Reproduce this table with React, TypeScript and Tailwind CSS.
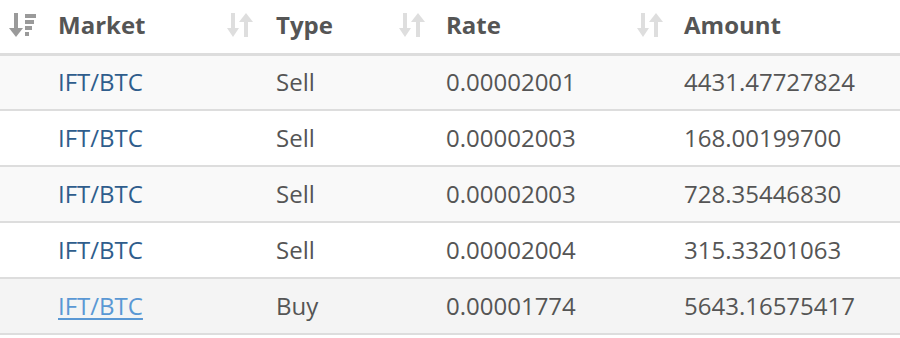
import React from 'react';

interface tradeInterface {
  market: string
  type: string
  rate: string
  amount: string
}

const trades: tradeInterface[] = [
  { market: 'IFT/BTC', type: 'Sell', rate: '0.00002001', amount: '4431.47727824' },
  { market: 'IFT/BTC', type: 'Sell', rate: '0.00002003', amount: '168.00199700' },
  { market: 'IFT/BTC', type: 'Sell', rate: '0.00002003', amount: '728.35446830' },
  { market: 'IFT/BTC', type: 'Sell', rate: '0.00002004', amount: '315.33201063' },
  { market: 'IFT/BTC', type: 'Buy', rate: '0.00001774', amount: '5643.16575417' },
];

// active column: arrow down + shrinking bars
const SortActive = () => (
  <svg width="28" height="24" viewBox="0 0 28 24" fill="#9a9a9a">
    <rect x="5" y="0" width="4" height="16" />
    <polygon points="0,15 14,15 7,24" />
    <rect x="16" y="1" width="11" height="4" />
    <rect x="16" y="7" width="9" height="4" />
    <rect x="16" y="13" width="7" height="4" />
    <rect x="16" y="19" width="4" height="4" />
  </svg>
);

const SortIdle = () => (
  <svg width="26" height="24" viewBox="0 0 26 24" fill="#dedede">
    <rect x="4" y="0" width="4" height="16" />
    <polygon points="0,15 12,15 6,24" />
    <rect x="17" y="8" width="4" height="16" />
    <polygon points="12,9 26,9 19,0" />
  </svg>
);

const columns = [
  { label: 'Market', width: 'w-[218px]', iconBox: 'w-[58px]', active: true },
  { label: 'Type', width: 'w-[172px]', iconBox: 'w-[58px]', active: false },
  { label: 'Rate', width: 'w-[238px]', iconBox: 'w-[56px]', active: false },
  { label: 'Amount', width: 'w-[272px]', iconBox: 'w-[56px]', active: false },
];

const App = () => {
  return (
    <div className="w-[900px] h-[338px] bg-white font-['Open_Sans',sans-serif] text-[#555]">
      <table className="w-[900px] border-collapse table-fixed">
        <thead>
          <tr className="border-b-[3px] border-[#dddddd]">
            {columns.map((col) => (
              <th key={col.label} className={`${col.width} h-[54px] p-0 text-left align-middle`}>
                <div className="flex items-center pb-[3px]">
                  <div className={`${col.iconBox} pl-[9px] flex items-center`}>
                    {col.active ? <SortActive /> : <SortIdle />}
                  </div>
                  <span className="text-[24px] font-bold text-[#555] leading-none">{col.label}</span>
                </div>
              </th>
            ))}
          </tr>
        </thead>
        <tbody>
          {trades.map((trade, i) => (
            <tr
              key={i}
              className={`h-[56px] border-b-2 border-[#dddddd] ${
                i === 4 ? 'bg-[#f4f4f4]' : i % 2 === 0 ? 'bg-[#f9f9f9]' : 'bg-white'
              }`}
            >
              <td className="pl-[58px] text-[24px]">
                <a
                  href="#"
                  className={i === 4 ? 'text-[#5a98d4] underline underline-offset-[3px]' : 'text-[#2f5d8c]'}
                >
                  {trade.market}
                </a>
              </td>
              <td className="pl-[58px] text-[24px]">{trade.type}</td>
              <td className="pl-[56px] text-[24px]">{trade.rate}</td>
              <td className="pl-[56px] text-[24px]">{trade.amount}</td>
            </tr>
          ))}
        </tbody>
      </table>
    </div>
  );
};

export default App;
